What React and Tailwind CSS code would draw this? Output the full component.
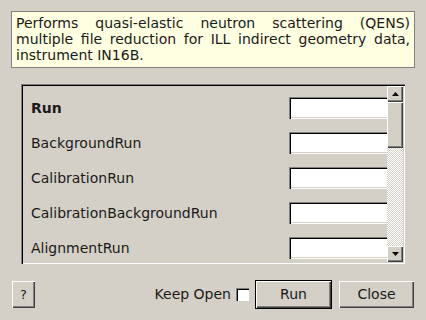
import React from 'react';

const raised =
  'bg-[#d4d0c8] shadow-[inset_1px_1px_#ffffff,inset_-1px_-1px_#404040,inset_-2px_-2px_#808080]';
const sunken =
  'bg-white shadow-[inset_1px_1px_#808080,inset_2px_2px_#000000,inset_-1px_-1px_#ffffff,inset_-2px_-2px_#d4d0c8]';

const fields = [
  { name: 'Run', bold: true },
  { name: 'BackgroundRun' },
  { name: 'CalibrationRun' },
  { name: 'CalibrationBackgroundRun' },
  { name: 'AlignmentRun' },
];

const Arrow = ({ down }) => (
  <svg width="7" height="4" viewBox="0 0 7 4">
    {down ? (
      <polygon points="0,0 7,0 3.5,4" fill="#000" />
    ) : (
      <polygon points="0,4 7,4 3.5,0" fill="#000" />
    )}
  </svg>
);

const FieldRow = ({ name, bold }) => (
  <div className="flex items-center h-[22px] shrink-0">
    <div className={`w-[266px] shrink-0 pl-[8px] text-[14px] text-[#1a1a1a] whitespace-nowrap ${bold ? 'font-bold' : ''}`}>
      {name}
    </div>
    <div className={`w-[120px] h-[22px] shrink-0 ${sunken}`} />
  </div>
);

const Scrollbar = () => (
  <div className="w-[16px] h-full flex flex-col shrink-0">
    <div className={`h-[16px] flex items-center justify-center ${raised}`}>
      <Arrow />
    </div>
    <div className={`h-[46px] ${raised}`} />
    <div className="flex-1 bg-[repeating-conic-gradient(#ffffff_0%_25%,#d4d0c8_0%_50%)] bg-[length:2px_2px]" />
    <div className={`h-[16px] flex items-center justify-center ${raised}`}>
      <Arrow down />
    </div>
  </div>
);

export default function App() {
  return (
    <div
      className="w-[426px] h-[320px] bg-[#d4d0c8] flex flex-col overflow-hidden"
      style={{ fontFamily: '"DejaVu Sans", sans-serif' }}
    >
      {/* Algorithm description */}
      <div className="ml-[11px] mt-[11px] w-[404px] h-[57px] bg-[#ffffe1] border border-[#808080] px-[4px] pt-[3px] text-[14px] leading-[16px] text-[#1a1a1a] text-justify">
        Performs quasi-elastic neutron scattering (QENS) multiple file reduction for ILL indirect geometry data, instrument IN16B.
      </div>

      {/* Property list */}
      <div className="ml-[21px] mt-[16px] w-[384px] h-[180px] p-[2px] shadow-[inset_1px_1px_#808080,inset_2px_2px_#000000,inset_-1px_-1px_#ffffff,inset_-2px_-2px_#d4d0c8] flex">
        <div className="flex-1 min-w-0 overflow-hidden flex flex-col gap-[13px] pt-[11px]">
          {fields.map((f) => (
            <FieldRow key={f.name} name={f.name} bold={f.bold} />
          ))}
        </div>
        <Scrollbar />
      </div>

      {/* Buttons */}
      <div className="mt-[16px] px-[12px] flex items-center justify-between h-[29px]">
        <div className={`w-[23px] h-[27px] flex items-center justify-center text-[13px] text-[#1a1a1a] ${raised}`}>
          ?
        </div>
        <div className="flex items-center">
          <span className="text-[14px] text-[#1a1a1a] mr-[5px]">Keep Open</span>
          <div className="w-[13px] h-[13px] mr-[6px] bg-white shadow-[inset_1px_1px_#808080,inset_2px_2px_#000000,inset_-1px_-1px_#ffffff]" />
          <div className="w-[77px] h-[29px] border border-black mr-[7px]">
            <div className={`w-full h-full flex items-center justify-center text-[14px] text-[#1a1a1a] ${raised}`}>
              Run
            </div>
          </div>
          <div className={`w-[75px] h-[27px] flex items-center justify-center text-[14px] text-[#1a1a1a] ${raised}`}>
            Close
          </div>
        </div>
      </div>
    </div>
  );
}
